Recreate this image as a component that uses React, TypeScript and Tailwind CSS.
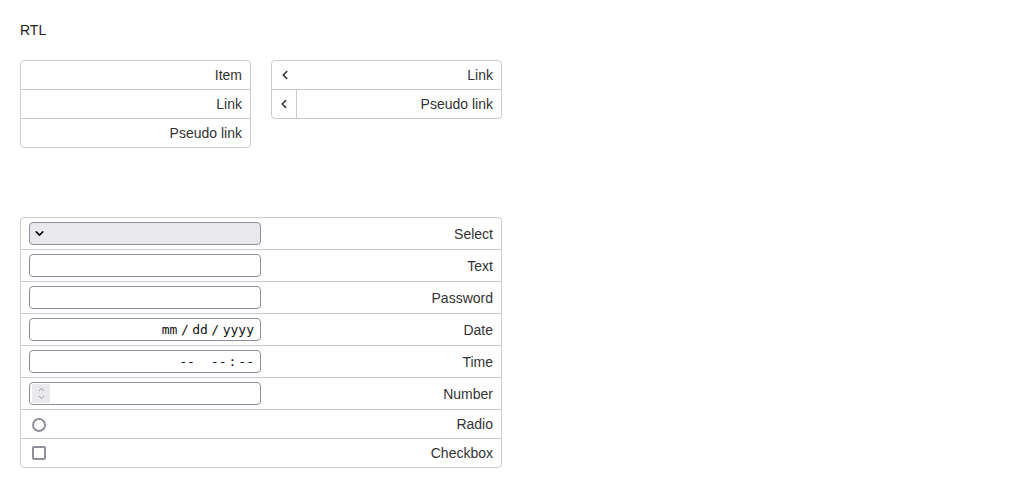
import { ChevronLeft, ChevronDown, ChevronUp } from 'lucide-react';

const font = { fontFamily: '"Liberation Sans", Arial, sans-serif' };
const mono = { fontFamily: '"DejaVu Sans Mono", "Liberation Mono", monospace' };

function FieldBox({ children, className = '' }: { children?: React.ReactNode; className?: string }) {
  return (
    <div
      className={`w-[232px] h-[23px] border border-[#8f8f9d] rounded-[4px] flex items-center ${className}`}
    >
      {children}
    </div>
  );
}

function FormRow({ label, control, tall = true }: { label: string; control: React.ReactNode; tall?: boolean }) {
  return (
    <div
      className={`box-content flex items-center justify-between px-2 border-b border-[#cccccc] last:border-b-0 ${
        tall ? 'h-[31px]' : 'h-[28px]'
      }`}
    >
      <span className="text-sm text-[#333333]">{label}</span>
      {control}
    </div>
  );
}

export default function App() {
  return (
    <div className="min-h-[488px] bg-white px-5 pt-[21px]" style={font}>
      <div className="text-sm text-[#222222] leading-[18px]">RTL</div>

      <div className="flex gap-5 mt-[21px] items-start">
        <div className="w-[231px] border border-[#cccccc] rounded-[4px] text-sm text-[#333333]" dir="rtl">
          {['Item', 'Link', 'Pseudo link'].map(item => (
            <div
              key={item}
              className="box-content h-[28px] flex items-center px-2 border-b border-[#cccccc] last:border-b-0"
            >
              {item}
            </div>
          ))}
        </div>
        <div className="w-[231px] border border-[#cccccc] rounded-[4px] text-sm text-[#333333]" dir="rtl">
          <div className="box-content h-[28px] flex items-center justify-between px-2 border-b border-[#cccccc]">
            <span>Link</span>
            <ChevronLeft className="w-[14px] h-[14px] -ml-[2px]" strokeWidth={2.75} />
          </div>
          <div className="h-[28px] flex items-center">
            <span className="flex-1 px-2">Pseudo link</span>
            <div className="w-[25px] h-full border-r border-[#cccccc] flex items-center justify-center">
              <ChevronLeft className="w-[14px] h-[14px]" strokeWidth={2.75} />
            </div>
          </div>
        </div>
      </div>

      <div className="w-[482px] mt-[69px] border border-[#cccccc] rounded-[4px]" dir="rtl">
        <FormRow
          label="Select"
          control={
            <FieldBox className="bg-[#e9e9ed] justify-end px-[3px]">
              <ChevronDown className="w-[13px] h-[13px] text-[#111111]" strokeWidth={3} />
            </FieldBox>
          }
        />
        <FormRow label="Text" control={<FieldBox />} />
        <FormRow label="Password" control={<FieldBox />} />
        <FormRow
          label="Date"
          control={
            <FieldBox className="px-[6px]">
              <div className="flex items-center gap-[3.5px] text-[13px] text-[#111111]" style={mono} dir="ltr">
                <span>mm</span>
                <span>/</span>
                <span>dd</span>
                <span>/</span>
                <span>yyyy</span>
              </div>
            </FieldBox>
          }
        />
        <FormRow
          label="Time"
          control={
            <FieldBox className="px-[6px]">
              <div className="flex items-center text-[13px] text-[#111111]" style={mono} dir="ltr">
                <span>--</span>
                <span className="ml-[16px]">--</span>
                <span className="mx-[2px]">:</span>
                <span>--</span>
              </div>
            </FieldBox>
          }
        />
        <FormRow
          label="Number"
          control={
            <FieldBox className="justify-end px-[2px]">
              <div className="w-[18px] h-[19px] bg-[#e9e9ed] flex flex-col items-center justify-center text-[#8f8f9d]">
                <ChevronUp className="w-[9px] h-[9px] -mb-[1px]" strokeWidth={2.5} />
                <ChevronDown className="w-[9px] h-[9px]" strokeWidth={2.5} />
              </div>
            </FieldBox>
          }
        />
        <FormRow
          label="Radio"
          tall={false}
          control={
            <div className="w-[232px] flex justify-end pl-[3px]">
              <div className="w-[14px] h-[14px] rounded-full border-2 border-[#8f8f9d] mt-[2px]" />
            </div>
          }
        />
        <FormRow
          label="Checkbox"
          tall={false}
          control={
            <div className="w-[232px] flex justify-end pl-[3px]">
              <div className="w-[14px] h-[14px] rounded-[2px] border-2 border-[#8f8f9d]" />
            </div>
          }
        />
      </div>
    </div>
  );
}
